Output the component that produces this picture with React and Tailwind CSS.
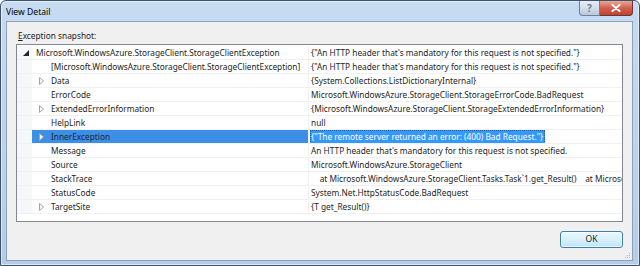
const rows = [
  { level: 0, arrow: "open", name: "Microsoft.WindowsAzure.StorageClient.StorageClientException", value: '{"An HTTP header that\'s mandatory for this request is not specified."}' },
  { level: 1, name: "[Microsoft.WindowsAzure.StorageClient.StorageClientException]", value: '{"An HTTP header that\'s mandatory for this request is not specified."}' },
  { level: 1, arrow: "closed", name: "Data", value: "{System.Collections.ListDictionaryInternal}" },
  { level: 1, name: "ErrorCode", value: "Microsoft.WindowsAzure.StorageClient.StorageErrorCode.BadRequest" },
  { level: 1, arrow: "closed", name: "ExtendedErrorInformation", value: "{Microsoft.WindowsAzure.StorageClient.StorageExtendedErrorInformation}" },
  { level: 1, name: "HelpLink", value: "null" },
  { level: 1, arrow: "closed", name: "InnerException", value: '{"The remote server returned an error: (400) Bad Request."}', selected: true },
  { level: 1, name: "Message", value: "An HTTP header that's mandatory for this request is not specified." },
  { level: 1, name: "Source", value: "Microsoft.WindowsAzure.StorageClient" },
  { level: 1, name: "StackTrace", value: "    at Microsoft.WindowsAzure.StorageClient.Tasks.Task`1.get_Result()    at Microsoft.WindowsAzure.StorageClient.Tasks.Task`1.ExecuteAndWait()" },
  { level: 1, name: "StatusCode", value: "System.Net.HttpStatusCode.BadRequest" },
  { level: 1, arrow: "closed", name: "TargetSite", value: "{T get_Result()}" },
];

function OpenArrow() {
  return (
    <svg width="6" height="6" viewBox="0 0 6 6" className="shrink-0">
      <path d="M6 0 L6 6 L0 6 Z" fill="#262626" />
    </svg>
  );
}

function ClosedArrow() {
  return (
    <svg width="5" height="8" viewBox="0 0 5 8" className="shrink-0">
      <path d="M0.5 0.5 L4.5 4 L0.5 7.5 Z" fill="#ffffff" stroke="#a3a3a3" strokeWidth="1" />
    </svg>
  );
}

function Row({ row }) {
  return (
    <div className="flex h-[14px] leading-[14px] border-b border-[#f1f1f1]">
      {/* gutter */}
      <div className="w-[15px] shrink-0 bg-[#f5f7fa] flex items-center pl-[6px]">
        {row.level === 0 && <OpenArrow />}
      </div>
      {/* name */}
      <div
        className={`w-[276px] shrink-0 flex items-center whitespace-nowrap overflow-hidden ${
          row.selected ? "bg-[#3d8fe6] text-[#1b2735]" : "text-[#1e1e1e]"
        } ${row.level === 0 ? "pl-[4px]" : row.arrow ? "pl-[7px]" : "pl-[19px]"}`}
      >
        {row.level === 1 && row.arrow && <span className="mr-[7px] flex items-center"><ClosedArrow /></span>}
        {row.name}
      </div>
      {/* value */}
      <div className="flex-1 border-l border-[#f1f1f1] pl-[1px] whitespace-pre overflow-hidden text-[#1e1e1e]">
        {row.selected ? (
          <span className="inline-block h-[14px] bg-[#3399ff] text-white pl-[1px] pr-[2px] outline outline-1 outline-dotted outline-[#1c5fa8] -outline-offset-1">
            {row.value}
          </span>
        ) : (
          <span className="pl-[1px]">{row.value}</span>
        )}
      </div>
    </div>
  );
}

export default function App() {
  return (
    <div className="w-[640px] h-[266px] overflow-hidden bg-white font-['Segoe_UI','Noto_Sans',sans-serif] text-[8.3px]">
      <div className="w-full h-full flex flex-col rounded-t-[6px] border border-[#3f5269] bg-gradient-to-b from-[#c6dbf1] via-[#bdd4ec] to-[#b4cde8] shadow-[inset_0_0_0_1px_rgba(255,255,255,0.55)]">
        {/* title bar */}
        <div className="h-[20px] shrink-0 flex items-start">
          <div className="pl-[5px] pt-[5px] text-[8.6px] leading-[12px] text-black">View Detail</div>
          <div className="ml-auto mr-[6px] flex">
            <div className="w-[21px] h-[15px] rounded-bl-[4px] border border-t-0 border-[#6f8197] bg-gradient-to-b from-[#e6eef6] via-[#d3deea] to-[#b8c8da] flex items-center justify-center text-[#6c7b8c] text-[10px] leading-none font-bold">
              ?
            </div>
            <div className="w-[33px] h-[15px] rounded-br-[4px] border border-t-0 border-l-0 border-[#6b3530] bg-gradient-to-b from-[#e9a899] via-[#d0604f] to-[#c2402f] flex items-center justify-center">
              <svg width="10" height="8" viewBox="0 0 10 8">
                <path d="M1.5 1 L8.5 7 M8.5 1 L1.5 7" stroke="#ffffff" strokeWidth="2" strokeLinecap="round" />
              </svg>
            </div>
          </div>
        </div>

        {/* client area */}
        <div className="relative flex-1 ml-[5px] mr-[6px] mb-[4px] border border-[#8aa2bc] bg-[#f0f0f0] flex flex-col pl-[9px] pr-[9px] pt-[7px]">
          <div className="h-[14px] leading-[14px] pl-[2px] text-[#1e1e1e]">
            <span className="underline">E</span>xception snapshot:
          </div>
          <div className="mt-[1px] h-[178px] border border-[#828790] bg-white pt-[1px] overflow-hidden">
            {rows.map((row) => (
              <Row key={row.name} row={row} />
            ))}
          </div>
          <div className="flex justify-end mt-[9px]">
            <button className="w-[63px] h-[17px] rounded-[3px] border border-[#3c7fb1] bg-gradient-to-b from-[#ecf7fd] via-[#d9f0fc] to-[#bde4f8] shadow-[inset_0_0_0_1px_rgba(255,255,255,0.7)] text-[8.6px] leading-none text-[#1e1e1e]">
              OK
            </button>
          </div>
          <svg width="7" height="7" viewBox="0 0 7 7" className="absolute right-[1px] bottom-[1px]">
            <rect x="5" y="1" width="1" height="1" fill="#b5b5b5" />
            <rect x="3" y="3" width="1" height="1" fill="#b5b5b5" />
            <rect x="5" y="3" width="1" height="1" fill="#b5b5b5" />
            <rect x="1" y="5" width="1" height="1" fill="#b5b5b5" />
            <rect x="3" y="5" width="1" height="1" fill="#b5b5b5" />
            <rect x="5" y="5" width="1" height="1" fill="#b5b5b5" />
          </svg>
        </div>
      </div>
    </div>
  );
}
